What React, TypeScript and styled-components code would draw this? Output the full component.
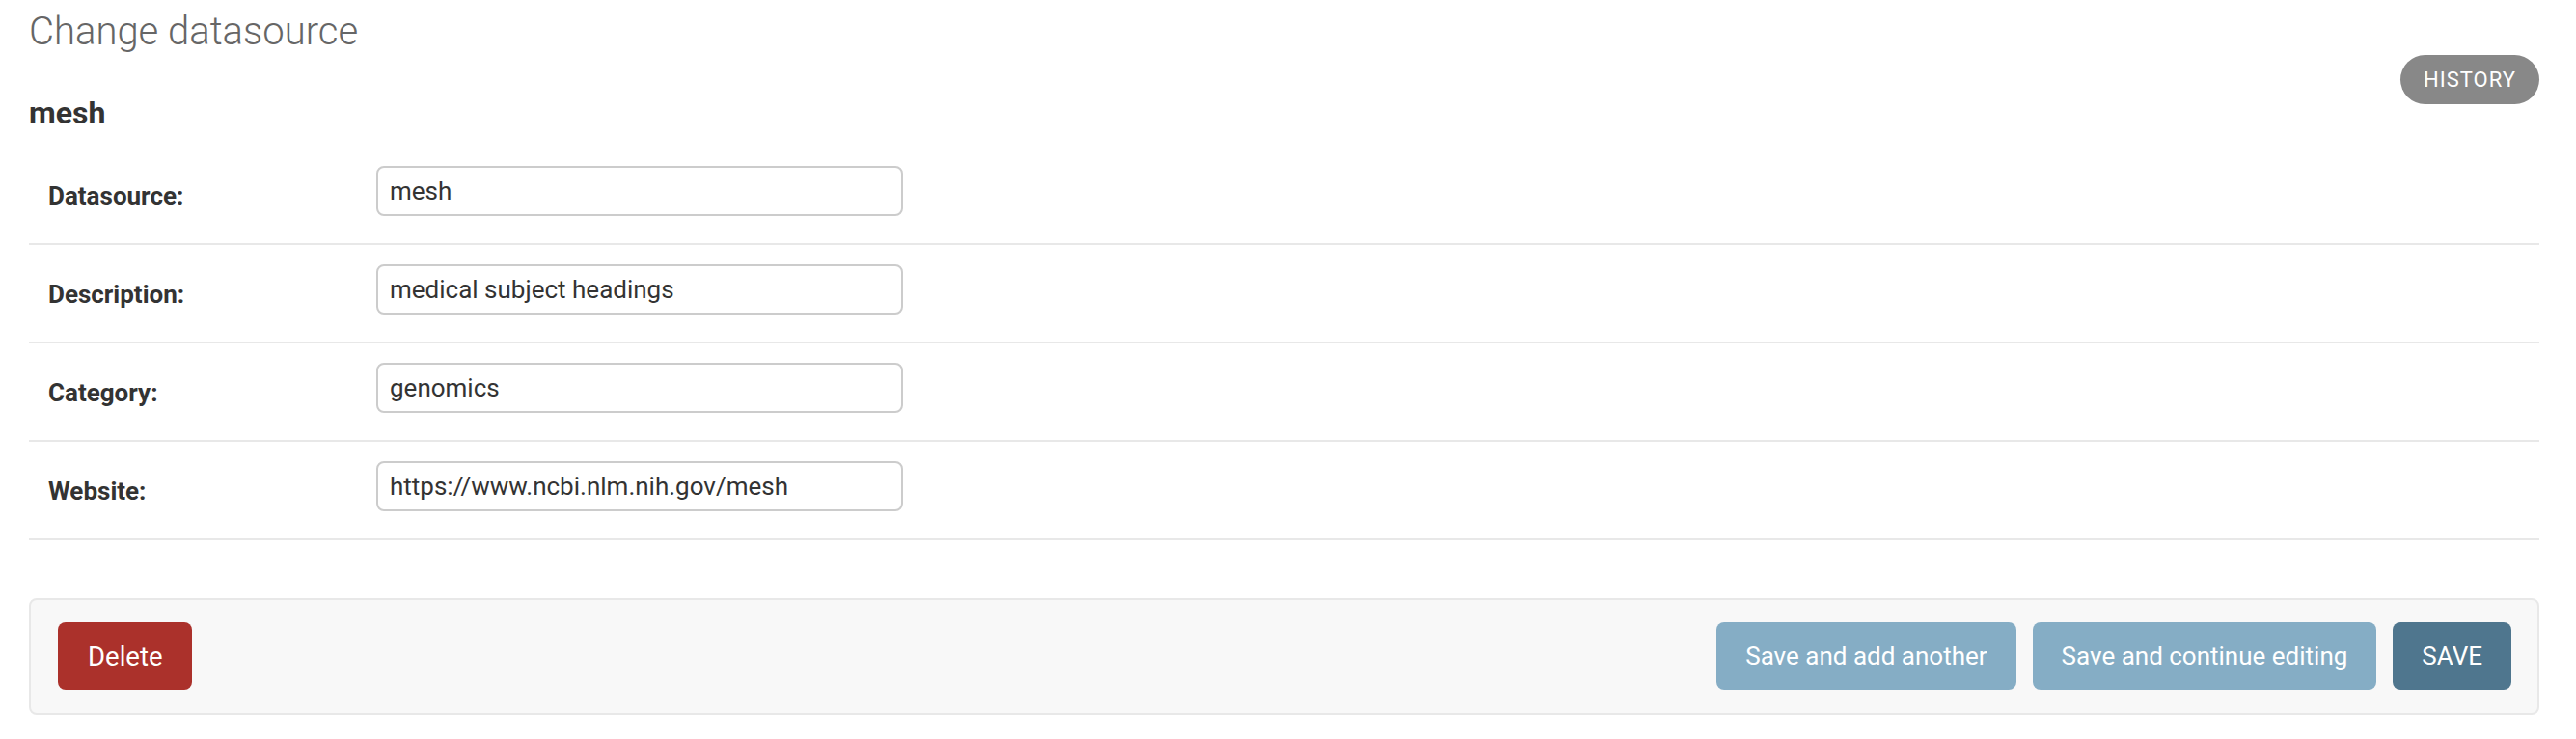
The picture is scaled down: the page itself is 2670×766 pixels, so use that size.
import React, { FC } from 'react'
import styled, { createGlobalStyle } from 'styled-components'

const GlobalStyle = createGlobalStyle`
	body {
		margin: 0;
		background: #fff;
		font-family: Roboto, 'Liberation Sans', Arial, sans-serif;
		color: #333;
	}
`

const Page = styled.div`
	padding: 9px 38px 0 30px;
`

const Title = styled.h1`
	margin: 0;
	font-size: 40px;
	line-height: 48px;
	font-weight: 300;
	color: #666;
`

const SubHeader = styled.div`
	display: flex;
	justify-content: space-between;
	align-items: flex-start;
`

const ObjectName = styled.h2`
	margin: 40px 0 0;
	font-size: 32px;
	line-height: 40px;
	font-weight: 700;
	color: #333;
`

const HistoryLink = styled.a`
	display: block;
	height: 51px;
	line-height: 51px;
	padding: 0 24px;
	border-radius: 30px;
	background: #888;
	color: #fff;
	font-size: 22px;
	letter-spacing: 1px;
	text-transform: uppercase;
	text-decoration: none;
`

const Fieldset = styled.div`
	margin-top: 15px;
`

const FormRow = styled.div`
	display: flex;
	align-items: flex-start;
	padding: 20px 20px 18px;
	border-bottom: 2px solid #e8e8e8;
`

const FieldLabel = styled.label`
	flex: 0 0 340px;
	font-size: 26px;
	line-height: 62px;
	font-weight: 700;
	color: #333;
`

const TextInput = styled.input`
	box-sizing: border-box;
	width: 546px;
	height: 52px;
	padding: 0 12px;
	border: 2px solid #ccc;
	border-radius: 8px;
	font-family: Roboto, 'Liberation Sans', Arial, sans-serif;
	font-size: 26px;
	color: #333;
	background: #fff;
	outline: none;
`

const SubmitRow = styled.div`
	display: flex;
	align-items: center;
	gap: 17px;
	margin-top: 60px;
	padding: 23px 27px 24px 28px;
	border: 2px solid #e8e8e8;
	border-radius: 8px;
	background: #f8f8f8;
`

type Variant = 'danger' | 'secondary' | 'primary'

const variantBg: Record<Variant, string> = {
	danger: '#ab312b',
	secondary: '#85adc5',
	primary: '#4f768e',
}

const ActionButton = styled.button<{ $variant: Variant }>`
	height: 70px;
	padding: 0 30px;
	border: none;
	border-radius: 8px;
	background: ${(props) => variantBg[props.$variant]};
	color: #fff;
	font-family: Roboto, 'Liberation Sans', Arial, sans-serif;
	font-size: 26px;
	font-weight: 400;
	cursor: pointer;
	${(props) =>
		props.$variant === 'danger'
			? 'margin-right: auto; font-size: 27.5px; padding: 0 31px;'
			: ''}
`

const fields = [
	{ name: 'datasource', label: 'Datasource:', value: 'mesh' },
	{ name: 'description', label: 'Description:', value: 'medical subject headings' },
	{ name: 'category', label: 'Category:', value: 'genomics' },
	{ name: 'website', label: 'Website:', value: 'https://www.ncbi.nlm.nih.gov/mesh' },
]

const App: FC = () => {
	return (
		<>
			<GlobalStyle />
			<Page>
				<Title>Change datasource</Title>
				<SubHeader>
					<ObjectName>mesh</ObjectName>
					<HistoryLink href="#">History</HistoryLink>
				</SubHeader>
				<Fieldset>
					{fields.map((f) => (
						<FormRow key={f.name}>
							<FieldLabel htmlFor={f.name}>{f.label}</FieldLabel>
							<TextInput id={f.name} defaultValue={f.value} />
						</FormRow>
					))}
				</Fieldset>
				<SubmitRow>
					<ActionButton $variant="danger">Delete</ActionButton>
					<ActionButton $variant="secondary">Save and add another</ActionButton>
					<ActionButton $variant="secondary">Save and continue editing</ActionButton>
					<ActionButton $variant="primary">SAVE</ActionButton>
				</SubmitRow>
			</Page>
		</>
	)
}

export default App
